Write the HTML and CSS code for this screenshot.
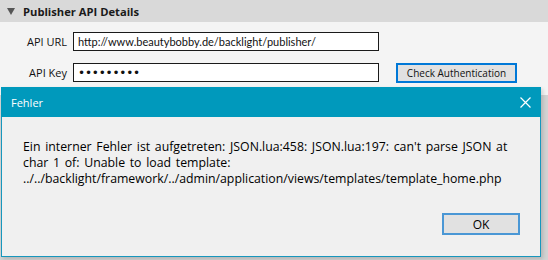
FILE: index.html
```html
<!DOCTYPE html>
<html lang="de">
<head>
    <meta charset="UTF-8">
    <title>Publisher API Details</title>
    <link rel="stylesheet" href="styles.css">
</head>
<body>
    <div class="panel">
        <div class="panel-head">
            <span class="arrow"></span>
            <span class="panel-title">Publisher API Details</span>
        </div>
        <div class="panel-body">
            <div class="form-row">
                <label for="api-url">API URL</label>
                <input type="text" id="api-url" value="http://www.beautybobby.de/backlight/publisher/">
            </div>
            <div class="form-row">
                <label for="api-key">API Key</label>
                <input type="password" id="api-key" value="123456789">
                <button class="check-btn">Check Authentication</button>
            </div>
        </div>
        <div class="panel-next"></div>
    </div>

    <div class="dialog">
        <div class="dialog-title">
            <span>Fehler</span>
            <svg class="close" width="11" height="11" viewBox="0 0 11 11">
                <path d="M0.5 0.5 L10.5 10.5 M10.5 0.5 L0.5 10.5" stroke="#fff" stroke-width="1.2" fill="none"/>
            </svg>
        </div>
        <div class="dialog-body">
            <p class="message">Ein interner Fehler ist aufgetreten: JSON.lua:458: JSON.lua:197: can't parse JSON at char 1 of: Unable to load template: ../../backlight/framework/../admin/application/views/templates/template_home.php</p>
            <div class="dialog-actions">
                <button class="ok-btn">OK</button>
            </div>
        </div>
    </div>
</body>
</html>
```

FILE: styles.css
```css
* {
    margin: 0;
    padding: 0;
    box-sizing: border-box;
    font-family: "Open Sans", "Noto Sans", sans-serif;
}

body {
    background-color: #f4f4f4;
    width: 548px;
    height: 260px;
    overflow: hidden;
    position: relative;
}

.panel-head {
    display: flex;
    align-items: center;
    height: 22px;
    padding-left: 7px;
    background: #d9d9d9;
}

.arrow {
    width: 0;
    height: 0;
    border-left: 4px solid transparent;
    border-right: 4px solid transparent;
    border-top: 7px solid #555;
    margin-right: 8px;
}

.panel-title {
    font-size: 11.2px;
    font-weight: bold;
    color: #1a1a1a;
}

.panel-body {
    padding-top: 10px;
    height: 73px;
}

.form-row {
    display: flex;
    align-items: center;
    height: 19px;
    margin-bottom: 12px;
}

.form-row label {
    width: 67px;
    text-align: right;
    margin-right: 6px;
    font-size: 11px;
    color: #111;
}

.form-row input {
    width: 306px;
    height: 19px;
    border: 1px solid #1a1a1a;
    background: #fff;
    padding: 0 4px;
    font-family: "Lato", sans-serif;
    font-size: 11px;
    color: #111;
    outline: none;
}

.form-row input[type="password"] {
    font-family: "DejaVu Sans", sans-serif;
    font-size: 12px;
    letter-spacing: -0.2px;
}

.check-btn {
    margin-left: 17px;
    width: 121px;
    height: 20px;
    border: 2px solid #0078d7;
    background: #e1e1e1;
    font-size: 10px;
    color: #111;
}

.panel-next {
    height: 165px;
    background: #d3d3d3;
}

.dialog {
    position: absolute;
    left: 1px;
    top: 87px;
    width: 540px;
    height: 170px;
    background: #f0f0f0;
    border: 1px solid #1797bd;
    border-top: none;
    box-shadow: 2px 2px 4px rgba(0,0,0,0.15);
}

.dialog-title {
    display: flex;
    justify-content: space-between;
    align-items: center;
    height: 30px;
    padding: 0 10px;
    margin: 0 -1px;
    background: #0099bc;
    color: #fff;
    font-size: 11px;
}

.dialog-body {
    padding: 22px 20px 0 21px;
}

.message {
    font-size: 12.3px;
    line-height: 16px;
    word-spacing: 1.5px;
    color: #000;
    height: 74px;
}

.dialog-actions {
    display: flex;
    justify-content: flex-end;
}

.ok-btn {
    width: 78px;
    height: 22px;
    border: 2px solid #4a97d5;
    background: #e1e1e1;
    font-size: 12px;
    color: #000;
}
```
